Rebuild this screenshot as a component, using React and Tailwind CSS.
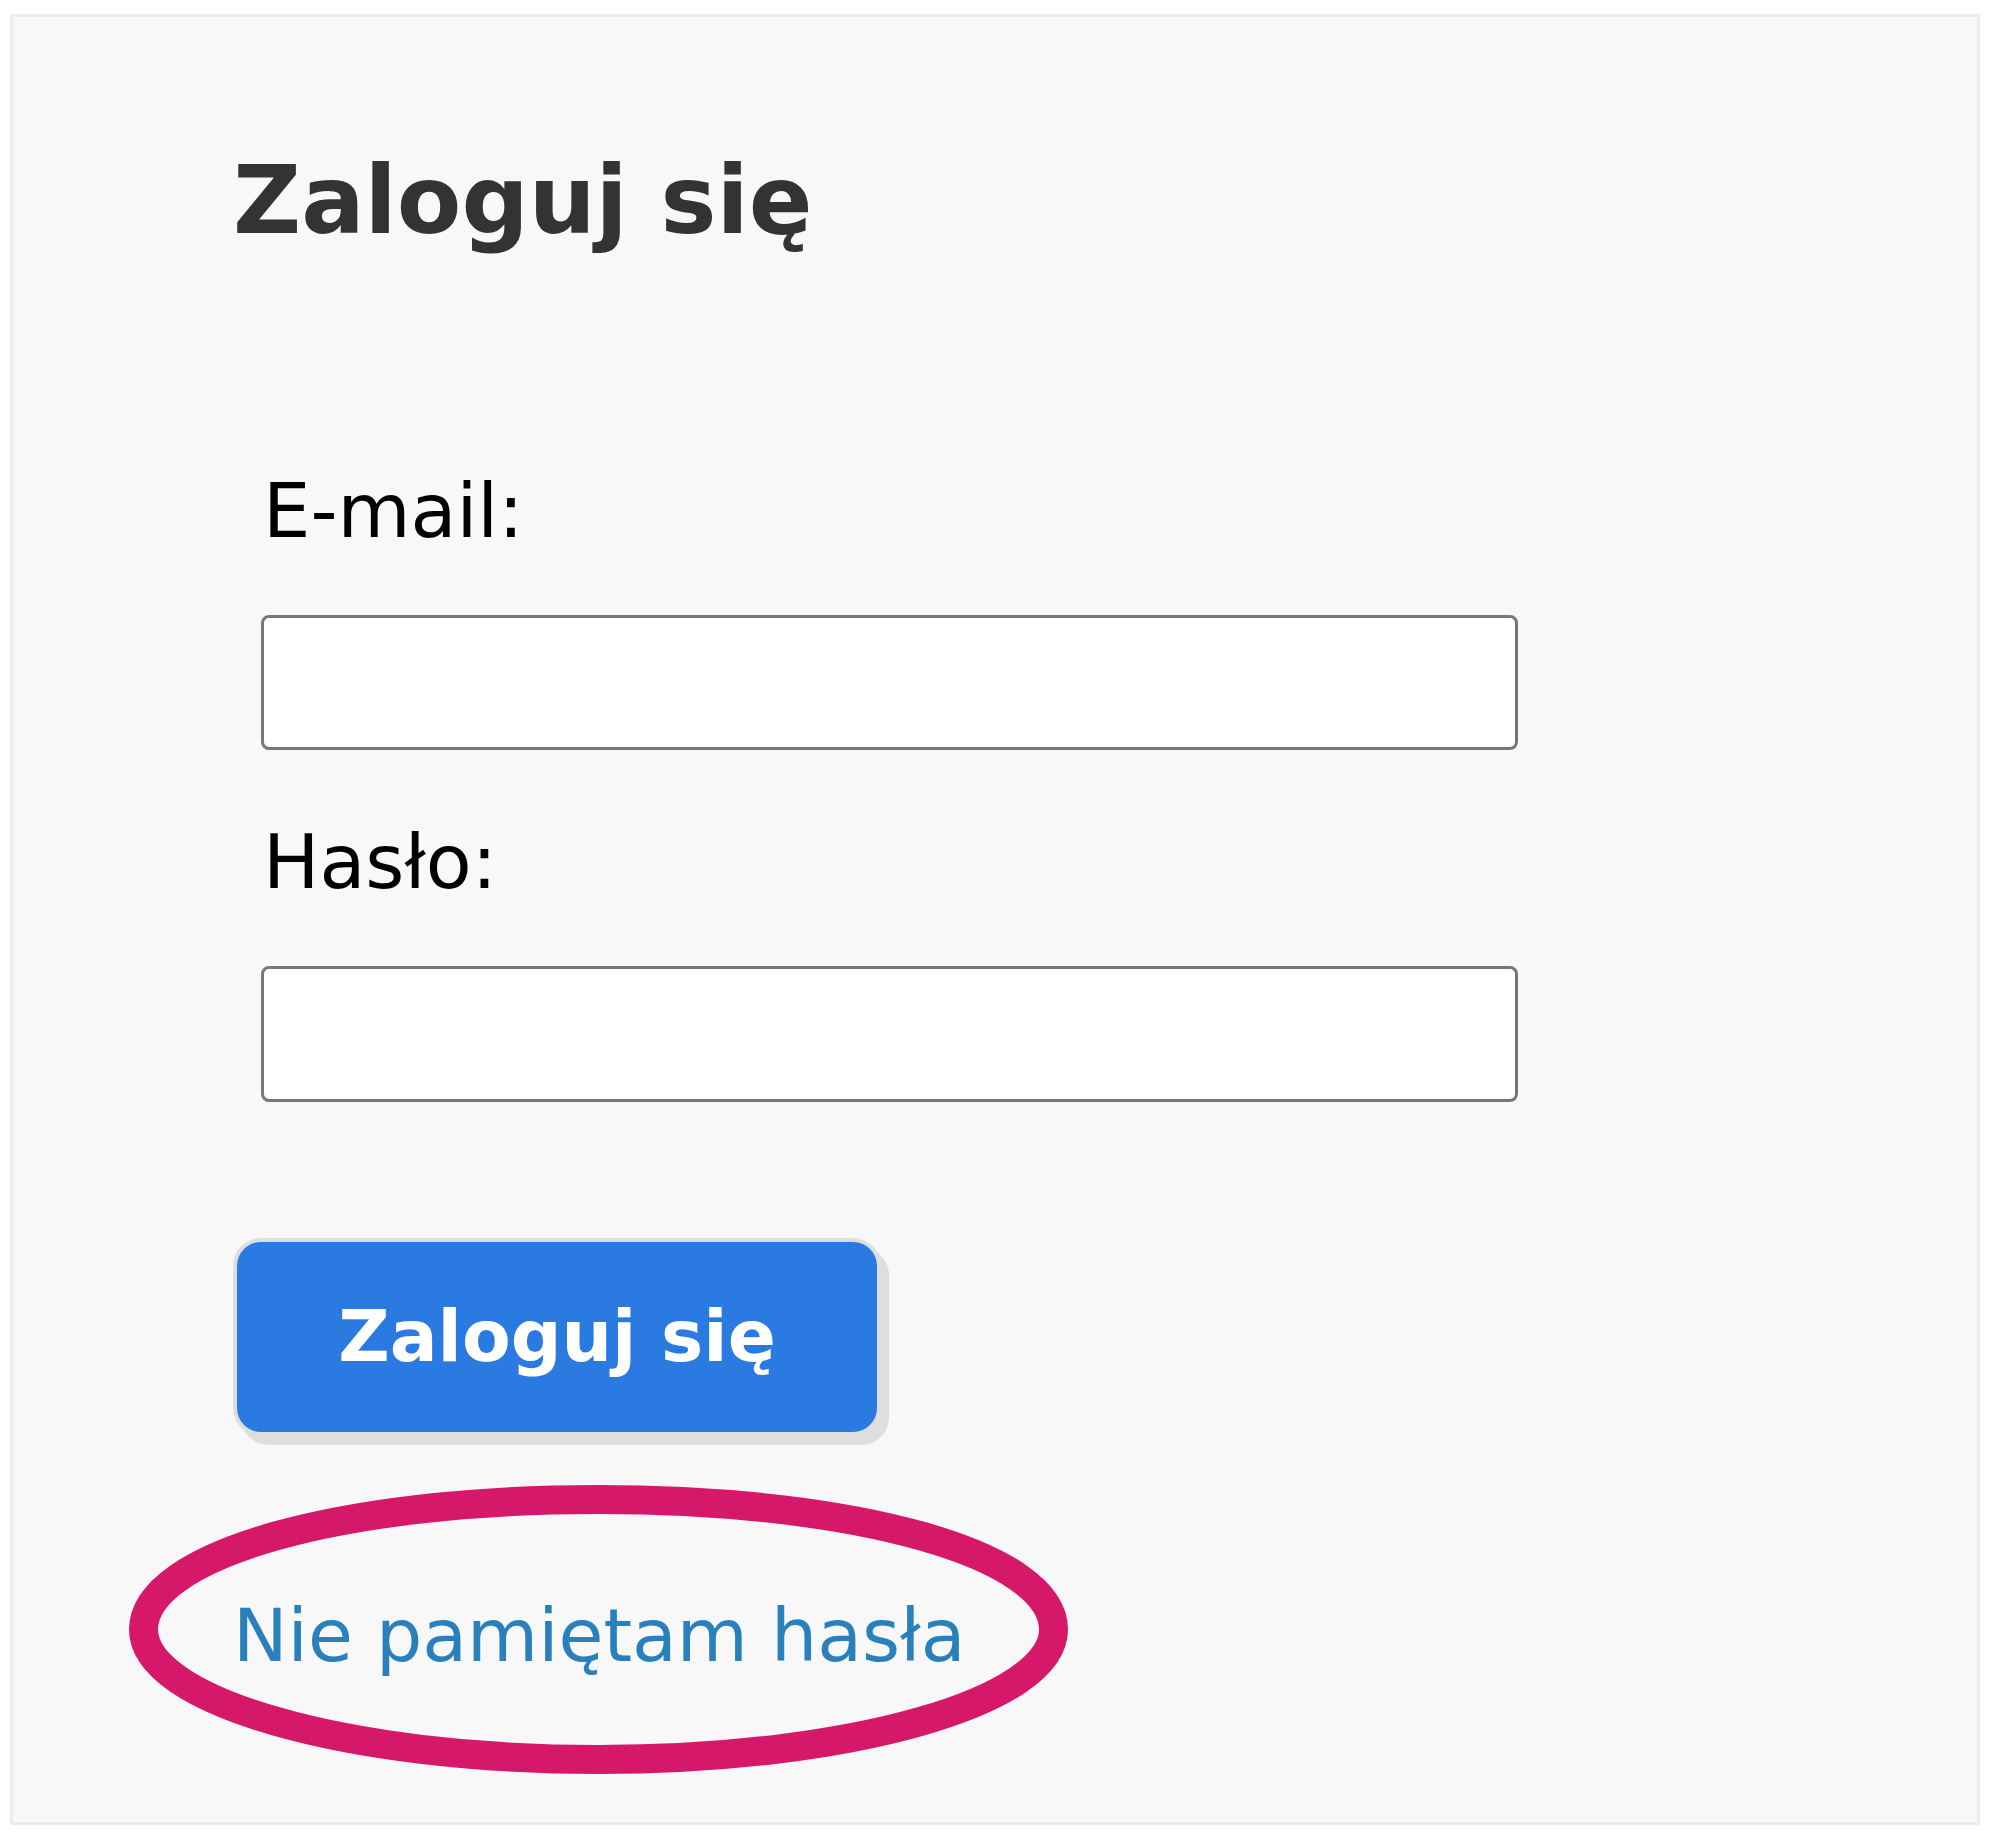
export default function App() {
  return (
    <div className="min-h-[1842px] w-[2000px] bg-white pt-[14px] pl-[10px] font-['DejaVu_Sans',sans-serif]">
      <div className="w-[1970px] h-[1811px] border-[3px] border-[#ececec] bg-[#f8f8f8] pl-[220px] pt-[137px]">
        <h1 className="text-[94px] leading-[94px] font-bold text-[#333333] whitespace-nowrap">Zaloguj się</h1>
        <form className="flex flex-col items-start" onSubmit={(e) => e.preventDefault()}>
          <div className="flex flex-col items-start">
            <label className="mt-[226px] ml-[30px] text-[75px] leading-[74px] text-black">E-mail:</label>
            <input type="email" className="mt-[67px] ml-[28px] w-[1257px] h-[135px] bg-white border-[3px] border-[#777777] rounded-[8px]" />
            <label className="mt-[75px] ml-[30px] text-[75px] leading-[74px] text-black">Hasło:</label>
            <input type="password" className="mt-[67px] ml-[28px] w-[1257px] h-[136px] bg-white border-[3px] border-[#777777] rounded-[8px]" />
          </div>
          <button type="submit" className="mt-[140px] ml-[4px] w-[640px] h-[190px] bg-[#2a7ae2] rounded-[24px] text-white font-bold text-[71px] leading-[72px] flex items-center justify-center shadow-[0_0_0_4px_#dedede,8px_9px_0_4px_#dedede]">
            Zaloguj się
          </button>
          <div className="relative mt-[168px]">
            <a href="#" className="block text-[73px] leading-[72px] text-[#2a80bd] whitespace-nowrap">Nie pamiętam hasła</a>
            <svg className="absolute left-[-104px] top-[-115px] pointer-events-none" width="939" height="289" viewBox="0 0 939 289">
              <path
                d="M 14.5,144.5 C 14.5,70 210,14.5 469.5,14.5 C 729,14.5 924.5,70 924.5,144.5 C 924.5,216.5 721,274.5 469.5,274.5 C 218,274.5 14.5,216.5 14.5,144.5 Z"
                fill="none"
                stroke="#d6186b"
                strokeWidth="29"
              />
            </svg>
          </div>
        </form>
      </div>
    </div>
  );
}
